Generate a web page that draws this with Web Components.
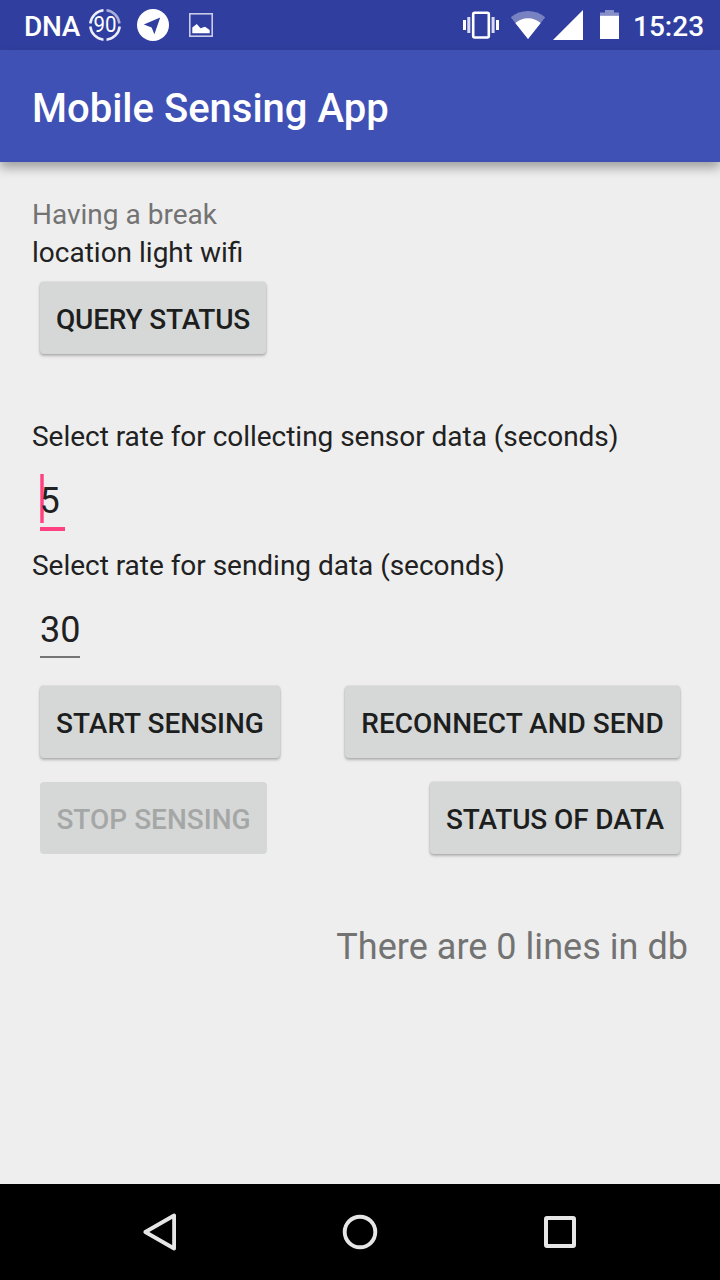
<!DOCTYPE html>
<html lang="en">
<head>
<meta charset="utf-8">
<title>Mobile Sensing App</title>
<style>
html,body{margin:0;padding:0}
body{width:720px;height:1280px;overflow:hidden;background:#eee;font-family:Roboto,"Noto Sans",sans-serif}
</style>
</head>
<body>
<sensing-screen></sensing-screen>
<script>
function define(name, html) {
  const t = document.createElement('template');
  t.innerHTML = html;
  customElements.define(name, class extends HTMLElement {
    constructor() {
      super();
      this.attachShadow({mode: 'open'}).appendChild(t.content.cloneNode(true));
    }
  });
}

define('status-bar', `
<style>
:host{display:flex;height:50px;background:#303f9f;color:#fff;font-size:28px;font-weight:500;line-height:50px;justify-content:space-between}
.side{display:flex;height:50px}
.text{padding-top:2px;white-space:nowrap;height:48px}
.carrier{margin-left:24px;width:62px;letter-spacing:-.3px}
.time{width:87px}
svg{display:block;flex:none}
.g{font:400 22px Roboto,sans-serif}
</style>
<div class="side">
  <div class="text carrier">DNA</div>
  <svg width="38" height="50" viewBox="86 0 38 50">
    <g fill="none" stroke="#eceef8" stroke-width="2.5">
      <path d="M119.4 23.5A14.8 14.8 0 0 0 106.5 10.3" stroke="#a9b0dc"/>
      <path d="M103.5 10.3A14.8 14.8 0 0 0 90.3 23.5M90.3 26.5A14.8 14.8 0 0 0 103.5 39.7M106.5 39.7A14.8 14.8 0 0 0 119.7 26.5"/>
    </g>
    <text class="g" x="105" y="32.3" text-anchor="middle" textLength="23" lengthAdjust="spacingAndGlyphs" fill="#fff">90</text>
  </svg>
  <svg width="48" height="50" viewBox="124 0 48 50">
    <circle cx="153" cy="25" r="16" fill="#fff"/>
    <path d="M143.8 24.6L160.2 17.4L154.4 34.2L151.6 27.5Z" fill="#303f9f"/>
  </svg>
  <svg width="48" height="50" viewBox="172 0 48 50">
    <rect x="189.8" y="13.8" width="22.4" height="22.4" fill="none" stroke="#c8cce8" stroke-width="1.6"/>
    <path d="M192.3 33.3V27.5L196.8 24L200.5 28.3L205 26.8L209.7 30V33.3Z" fill="#fff"/>
  </svg>
</div>
<div class="side">
  <svg width="174" height="50" viewBox="459 0 174 50" fill="#fff">
    <rect x="473.2" y="12.7" width="15.6" height="24.8" rx="1.5" fill="none" stroke="#fff" stroke-width="2.6"/>
    <path d="M463 20h3v10h-3zM496 20h3v10h-3z"/>
    <path d="M467.3 17h3v16h-3zM491.6 17h3v16h-3z" fill="#d9dcf0"/>
    <path d="M528 39L510.8 17.2C520.8 9 535.2 9 545.2 17.2Z" opacity=".35"/>
    <path d="M528 39L515.3 23C522.8 16.6 533.2 16.6 540.7 23Z"/>
    <path d="M553 40H583V10Z"/>
    <path d="M605 10H614V12.6H619V15.7H600V12.6H605Z" opacity=".42"/>
    <path d="M600 15.7H619V39H600Z"/>
  </svg>
  <div class="text time">15:23</div>
</div>`);

define('app-bar', `
<style>
:host{display:flex;align-items:center;box-sizing:border-box;height:112px;padding:4px 32px 0;background:#3f51b5;color:#fff;font-size:40px;font-weight:500;position:relative;box-shadow:0 6px 10px rgba(0,0,0,.32)}
</style><slot></slot>`);

define('text-view', `
<style>
:host{display:block;box-sizing:border-box;height:38px;padding-top:2px;line-height:38px;font-size:28px;color:#212121;white-space:nowrap}
:host([tight]){letter-spacing:-.03px}
:host([muted]){color:#737373}
:host([large]){font-size:36px;height:48px;line-height:48px;padding-top:1px;letter-spacing:.03px}
</style><slot></slot>`);

define('raised-button', `
<style>
:host{display:block;padding:12px 8px;width:max-content}
button{display:block;box-sizing:border-box;width:var(--w);height:72px;border:0;border-radius:4px;padding:3px 0 1px;margin:0;background:#d6d8d7;color:#1d1e1e;font:500 28px/70px Roboto,sans-serif;letter-spacing:var(--ls,0);white-space:nowrap;text-align:center;box-shadow:0 2px 3px rgba(0,0,0,.24),0 0 2px rgba(0,0,0,.2)}
:host([disabled]) button{box-shadow:none;color:#a5a7a6}
</style><button><slot></slot></button>`);

define('number-field', `
<style>
:host{display:block;height:91px}
.box{box-sizing:border-box;margin-left:8px;width:var(--w);height:75px;border-bottom:2px solid #757575;padding-top:23px;font-size:36px;line-height:48px;color:#212121;position:relative}
:host([focused]) .box{border-bottom:4px solid #ff4081;height:77px}
.caret{display:none;position:absolute;left:0;top:20px;width:4px;height:49px;background:linear-gradient(90deg,#fb8bae,#ff4081 35%,#ff4081 65%,#fb8bae)}
.value{position:relative}
:host([focused]) .value{left:-.5px}
:host([focused]) .caret{display:block}
</style><div class="box"><span class="caret"></span><span class="value"><slot></slot></span></div>`);

define('nav-bar', `
<style>
:host{display:grid;grid-template-columns:repeat(3,200px);justify-content:center;align-items:center;height:96px;background:#000}
svg{display:block;margin:auto}
</style>
<svg width="40" height="40" viewBox="0 0 40 40" fill="none" stroke="#e6e6e6" stroke-width="3.8" stroke-linejoin="round"><path d="M5.3 20L34.1 3.5V36.5Z"/></svg>
<svg width="40" height="40" viewBox="0 0 40 40" fill="none" stroke="#e6e6e6" stroke-width="3.9"><circle cx="20" cy="20" r="15.3"/></svg>
<svg width="40" height="40" viewBox="0 0 40 40" fill="none" stroke="#e6e6e6" stroke-width="4"><rect x="6" y="6" width="28" height="28" rx="1"/></svg>`);

define('sensing-screen', `
<style>
:host{display:flex;flex-direction:column;width:720px;height:1280px}
main{flex:1;padding:32px 32px 0}
.rates{margin-top:50px}
.row{display:flex;justify-content:space-between}
.count{display:flex;justify-content:flex-end;margin-top:56px}
</style>
<status-bar></status-bar>
<app-bar>Mobile Sensing App</app-bar>
<main>
  <section>
    <text-view muted>Having a break</text-view>
    <text-view>location light wifi</text-view>
    <raised-button style="--w:226px;--ls:-.18px">QUERY STATUS</raised-button>
  </section>
  <section class="rates">
    <text-view tight>Select rate for collecting sensor data (seconds)</text-view>
    <number-field focused style="--w:25px">5</number-field>
    <text-view tight>Select rate for sending data (seconds)</text-view>
    <number-field style="--w:40px">30</number-field>
  </section>
  <div class="row"><raised-button style="--w:240px">START SENSING</raised-button><raised-button style="--w:335px">RECONNECT AND SEND</raised-button></div>
  <div class="row"><raised-button disabled style="--w:227px">STOP SENSING</raised-button><raised-button style="--w:250px;--ls:-.12px">STATUS OF DATA</raised-button></div>
  <div class="count"><text-view muted large>There are 0 lines in db</text-view></div>
</main>
<nav-bar></nav-bar>`);
</script>
</body>
</html>
